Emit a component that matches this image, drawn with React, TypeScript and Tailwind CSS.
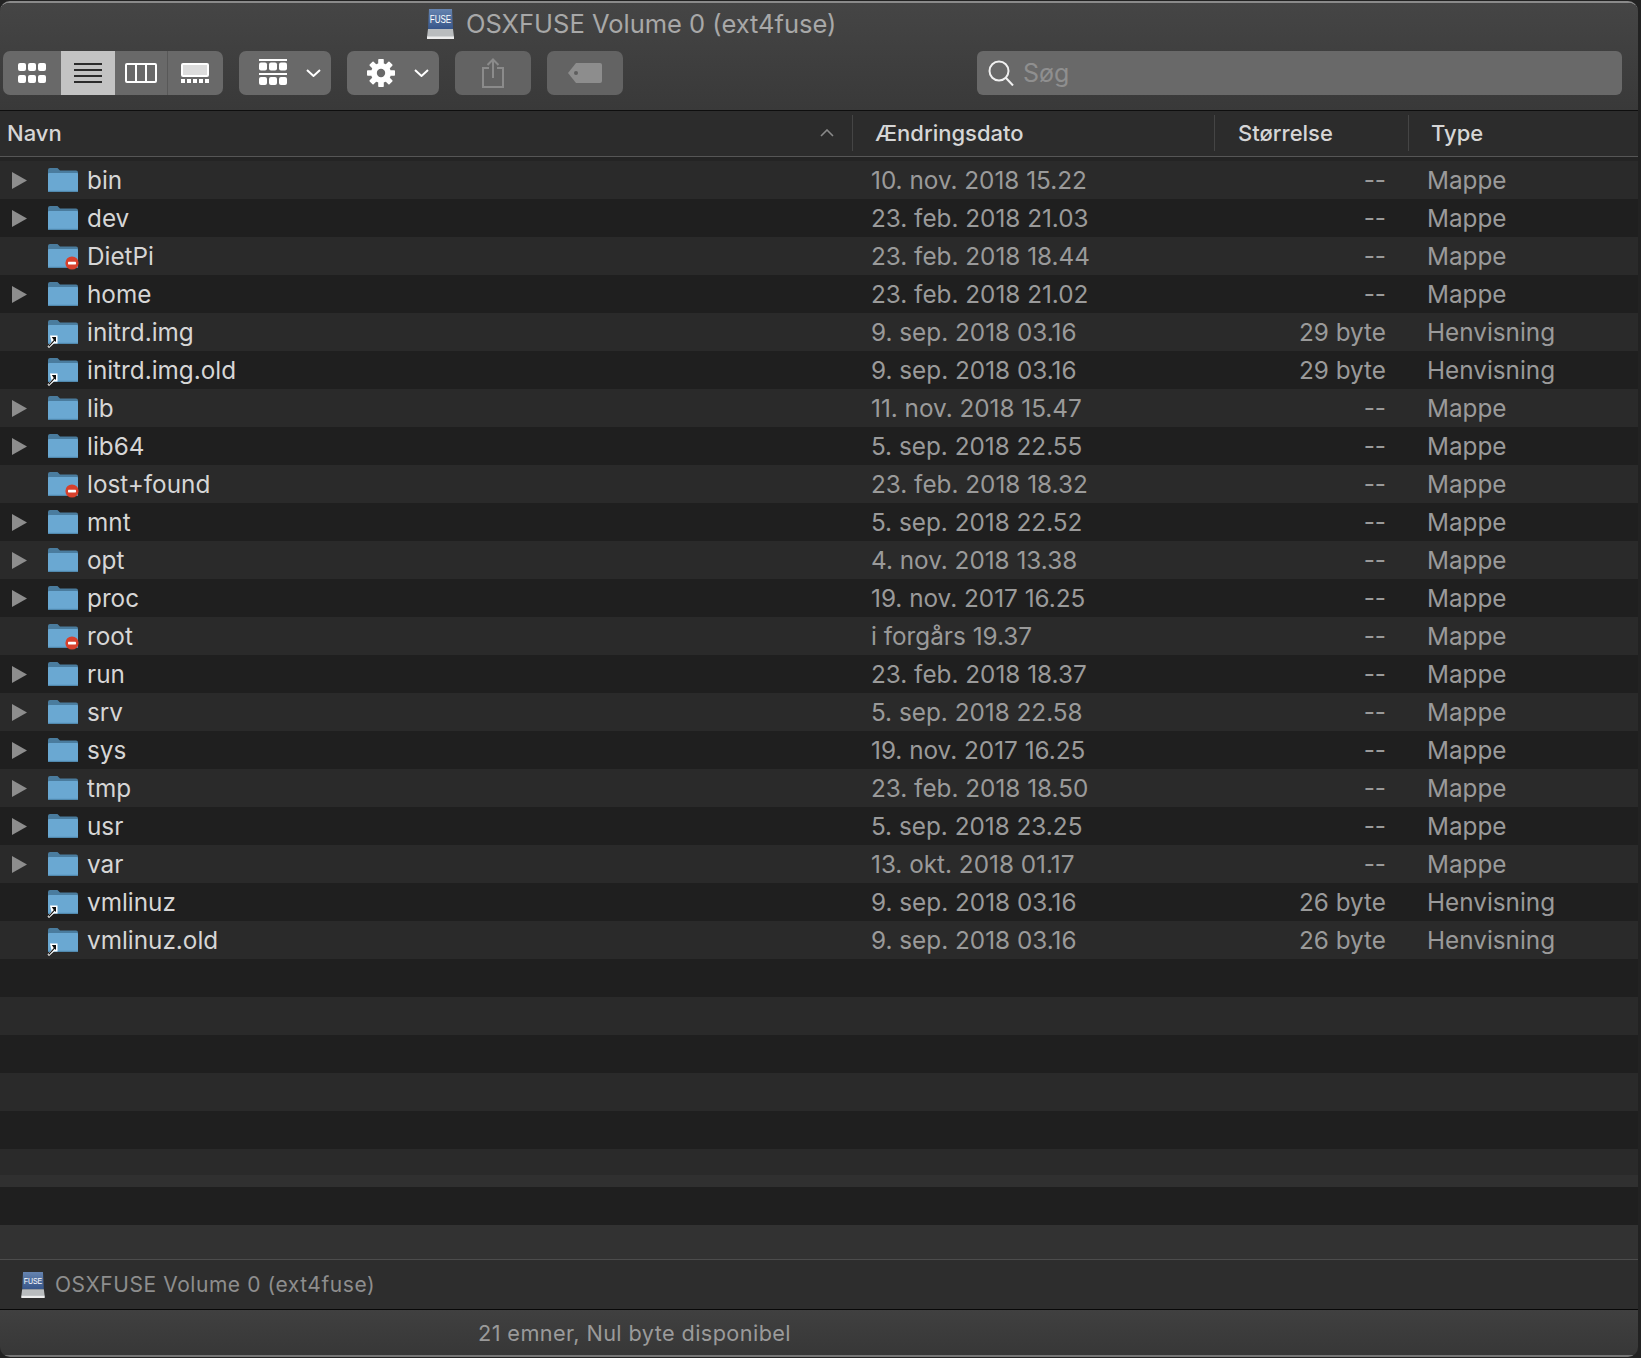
type Kind = 'folder' | 'locked' | 'alias'

const rows: { name: string; date: string; size: string; type: string; kind: Kind }[] = [
	{ name: 'bin', date: '10. nov. 2018 15.22', size: '--', type: 'Mappe', kind: 'folder' },
	{ name: 'dev', date: '23. feb. 2018 21.03', size: '--', type: 'Mappe', kind: 'folder' },
	{ name: 'DietPi', date: '23. feb. 2018 18.44', size: '--', type: 'Mappe', kind: 'locked' },
	{ name: 'home', date: '23. feb. 2018 21.02', size: '--', type: 'Mappe', kind: 'folder' },
	{ name: 'initrd.img', date: '9. sep. 2018 03.16', size: '29 byte', type: 'Henvisning', kind: 'alias' },
	{ name: 'initrd.img.old', date: '9. sep. 2018 03.16', size: '29 byte', type: 'Henvisning', kind: 'alias' },
	{ name: 'lib', date: '11. nov. 2018 15.47', size: '--', type: 'Mappe', kind: 'folder' },
	{ name: 'lib64', date: '5. sep. 2018 22.55', size: '--', type: 'Mappe', kind: 'folder' },
	{ name: 'lost+found', date: '23. feb. 2018 18.32', size: '--', type: 'Mappe', kind: 'locked' },
	{ name: 'mnt', date: '5. sep. 2018 22.52', size: '--', type: 'Mappe', kind: 'folder' },
	{ name: 'opt', date: '4. nov. 2018 13.38', size: '--', type: 'Mappe', kind: 'folder' },
	{ name: 'proc', date: '19. nov. 2017 16.25', size: '--', type: 'Mappe', kind: 'folder' },
	{ name: 'root', date: 'i forgårs 19.37', size: '--', type: 'Mappe', kind: 'locked' },
	{ name: 'run', date: '23. feb. 2018 18.37', size: '--', type: 'Mappe', kind: 'folder' },
	{ name: 'srv', date: '5. sep. 2018 22.58', size: '--', type: 'Mappe', kind: 'folder' },
	{ name: 'sys', date: '19. nov. 2017 16.25', size: '--', type: 'Mappe', kind: 'folder' },
	{ name: 'tmp', date: '23. feb. 2018 18.50', size: '--', type: 'Mappe', kind: 'folder' },
	{ name: 'usr', date: '5. sep. 2018 23.25', size: '--', type: 'Mappe', kind: 'folder' },
	{ name: 'var', date: '13. okt. 2018 01.17', size: '--', type: 'Mappe', kind: 'folder' },
	{ name: 'vmlinuz', date: '9. sep. 2018 03.16', size: '26 byte', type: 'Henvisning', kind: 'alias' },
	{ name: 'vmlinuz.old', date: '9. sep. 2018 03.16', size: '26 byte', type: 'Henvisning', kind: 'alias' },
]

function FuseIcon({ className }: { className: string }) {
	return (
		<svg viewBox="0 0 27 30" className={className}>
			<defs>
				<linearGradient id="fuseFace" x1="0" y1="0" x2="0" y2="1">
					<stop offset="0" stopColor="#6684b0" />
					<stop offset="1" stopColor="#37568a" />
				</linearGradient>
			</defs>
			<path d="M2 0h23l1 20H1z" fill="url(#fuseFace)" />
			<path d="M1 20h25l1 8H0z" fill="#b9bcbe" />
			<rect x="0" y="27.5" width="27" height="2.5" fill="#ececec" />
			<text
				transform="translate(13.5 14) scale(1 1.3)"
				textAnchor="middle"
				fontSize="8"
				fill="#ffffff"
				fontFamily="Liberation Sans, sans-serif"
			>
				FUSE
			</text>
		</svg>
	)
}

function FolderIcon({ kind }: { kind: Kind }) {
	return (
		<svg viewBox="0 0 30 24" className="h-[24px] w-[30px] overflow-visible">
			<path d="M0 2a2 2 0 0 1 2-2h7.5l2.5 2.5h16a2 2 0 0 1 2 2V10H0z" fill="#4a7c9e" />
			<path d="M0 6a1 1 0 0 1 1-1h28a1 1 0 0 1 1 1v16.5a1.5 1.5 0 0 1-1.5 1.5h-27A1.5 1.5 0 0 1 0 22.5z" fill="#6aa8d2" />
			<rect x="0" y="22.8" width="30" height="1.2" fill="#5189ae" />
			{kind === 'locked' && (
				<g>
					<circle cx="24" cy="19" r="6.6" fill="#d7402c" />
					<rect x="20" y="17.8" width="8" height="2.6" rx="0.6" fill="#ffffff" />
				</g>
			)}
			{kind === 'alias' && (
				<g>
					<path d="M2 15.5h7.5v8H6L1 28l-1.5-1.5L3.5 22z" fill="#ffffff" />
					<path d="M3.8 17h4.2v5l-1.3-1.3-5.6 6-.8-.8 5.5-6z" fill="#111111" />
				</g>
			)}
		</svg>
	)
}

function Triangle() {
	return (
		<svg viewBox="0 0 15 17" className="h-[17px] w-[15px]">
			<path d="M0 0l15 8.5L0 17z" fill="#8d8d8d" />
		</svg>
	)
}

function Chevron() {
	return (
		<svg viewBox="0 0 15 8" className="h-[8px] w-[15px]">
			<path d="M1 1l6.5 6L14 1" fill="none" stroke="#ffffff" strokeWidth="2" />
		</svg>
	)
}

function DotRow({ y }: { y: number }) {
	return (
		<g fill="#ffffff">
			<rect x="0" y={y} width="8" height="8" rx="2" />
			<rect x="10" y={y} width="8" height="8" rx="2" />
			<rect x="20" y={y} width="8" height="8" rx="2" />
		</g>
	)
}

function ViewSwitcher() {
	return (
		<div className="flex h-[44px] w-[220px] overflow-hidden rounded-[7px] bg-[#696969]">
			<div className="flex w-[58px] items-center justify-center">
				<svg viewBox="0 0 28 20" className="h-[20px] w-[28px]">
					<DotRow y={0} />
					<DotRow y={12} />
				</svg>
			</div>
			<div className="flex w-[54px] items-center justify-center bg-[#c3c3c3]">
				<svg viewBox="0 0 28 20" className="h-[20px] w-[28px]" fill="#2b2b2b">
					<rect y="0" width="28" height="2" />
					<rect y="6" width="28" height="2" />
					<rect y="12" width="28" height="2" />
					<rect y="18" width="28" height="2" />
				</svg>
			</div>
			<div className="flex w-[53px] items-center justify-center border-r border-[#585858]">
				<svg viewBox="0 0 32 20" className="h-[20px] w-[32px]" fill="none" stroke="#ffffff" strokeWidth="2">
					<rect x="1" y="1" width="30" height="18" rx="1" />
					<path d="M11 1v18M21 1v18" />
				</svg>
			</div>
			<div className="flex flex-1 items-center justify-center pr-[2px]">
				<svg viewBox="0 0 28 20" className="h-[20px] w-[28px]">
					<rect x="1" y="1" width="26" height="12" rx="1" fill="#dcdcdc" stroke="#ffffff" strokeWidth="2" />
					{[0, 6, 12, 18, 24].map(x => (
						<rect key={x} x={x} y="16" width="4" height="4" fill="#ffffff" />
					))}
				</svg>
			</div>
		</div>
	)
}

function ArrangeButton() {
	return (
		<div className="ml-[16px] flex h-[44px] w-[92px] items-center rounded-[7px] bg-[#696969] pl-[20px]">
			<svg viewBox="0 0 28 28" className="h-[28px] w-[28px]">
				<rect y="0" width="28" height="2" fill="#ffffff" />
				<DotRow y={3.5} />
				<rect y="14" width="28" height="2" fill="#ffffff" />
				<DotRow y={18} />
			</svg>
			<div className="ml-[19px] flex">
				<Chevron />
			</div>
		</div>
	)
}

function ActionButton() {
	return (
		<div className="ml-[16px] flex h-[44px] w-[92px] items-center rounded-[7px] bg-[#696969] pl-[20px]">
			<svg viewBox="-14 -14 28 28" className="h-[28px] w-[28px]">
				<g fill="#ffffff">
					<circle r="10" />
					{[0, 45, 90, 135].map(a => (
						<rect key={a} x="-2.8" y="-14" width="5.6" height="28" rx="0.8" transform={`rotate(${a})`} />
					))}
				</g>
				<circle r="4.2" fill="#696969" />
			</svg>
			<div className="ml-[19px] flex">
				<Chevron />
			</div>
		</div>
	)
}

function ShareButton() {
	return (
		<div className="ml-[16px] flex h-[44px] w-[76px] items-center justify-center rounded-[7px] bg-[#636363]">
			<svg viewBox="0 0 22 30" className="h-[30px] w-[22px]" fill="none" stroke="#8b8b8b" strokeWidth="2">
				<path d="M7 10H1v19h20V10h-6" />
				<path d="M11 20V1.5M5.5 7L11 1.5 16.5 7" />
			</svg>
		</div>
	)
}

function TagButton() {
	return (
		<div className="ml-[16px] flex h-[44px] w-[76px] items-center justify-center rounded-[7px] bg-[#636363]">
			<svg viewBox="0 0 34 20" className="h-[20px] w-[34px]">
				<path d="M8 0h24a2 2 0 0 1 2 2v16a2 2 0 0 1-2 2H8L0 10z" fill="#8d8d8d" />
				<circle cx="8" cy="10" r="2" fill="#5e5e5e" />
			</svg>
		</div>
	)
}

function SearchField() {
	return (
		<div className="ml-[354px] flex h-[44px] w-[645px] items-center rounded-[6px] bg-[#696969] pl-[11px]">
			<svg viewBox="0 0 26 26" className="h-[26px] w-[26px]" fill="none" stroke="#f0f0f0" strokeWidth="2">
				<circle cx="11" cy="11" r="9.5" />
				<path d="M18 18l7 7.5" />
			</svg>
			<span className="ml-[9px] pt-[2px] text-[25px] text-[#8f8f8f]">Søg</span>
		</div>
	)
}

function ColumnHeaders() {
	return (
		<div className="flex h-[45px] items-center bg-[#2c2c2c] pb-[1px] text-[22px] font-medium text-[#d6d6d6]">
			<div className="flex h-[36px] w-[853px] items-center justify-between border-r border-[#454545] pl-[7px] pr-[18px]">
				<span>Navn</span>
				<svg viewBox="0 0 14 8" className="h-[8px] w-[14px]">
					<path d="M1 7l6-6 6 6" fill="none" stroke="#8a8a8a" strokeWidth="1.6" />
				</svg>
			</div>
			<div className="flex h-[36px] w-[362px] items-center border-r border-[#454545] pl-[22px]">Ændringsdato</div>
			<div className="flex h-[36px] w-[194px] items-center border-r border-[#454545] pl-[23px]">Størrelse</div>
			<div className="flex h-[36px] items-center pl-[22px]">Type</div>
		</div>
	)
}

function FileRow({ row, index }: { row: (typeof rows)[number]; index: number }) {
	return (
		<div className={`flex h-[38px] items-center text-[24.3px] ${index % 2 === 0 ? 'bg-[#2a2a2a]' : 'bg-[#1f1f1f]'}`}>
			<div className="flex w-[48px] pl-[12px]">{row.kind === 'folder' && <Triangle />}</div>
			<div className="flex w-[823px] items-center">
				<FolderIcon kind={row.kind} />
				<span className="ml-[9px] pt-[1px] text-[#d6d6d6]">{row.name}</span>
			</div>
			<div className="w-[340px] pt-[1px] text-[#9a9a9a]">{row.date}</div>
			<div className="w-[175px] pt-[1px] text-right text-[#9a9a9a]">{row.size}</div>
			<div className="ml-[41px] pt-[1px] text-[#9a9a9a]">{row.type}</div>
		</div>
	)
}

const fillers = [
	'h-[38px] bg-[#1f1f1f]',
	'h-[38px] bg-[#2a2a2a]',
	'h-[38px] bg-[#1f1f1f]',
	'h-[38px] bg-[#2a2a2a]',
	'h-[38px] bg-[#1f1f1f]',
	'h-[26px] bg-[#2a2a2a]',
	'h-[12px] bg-[#303030]',
	'h-[38px] bg-[#1f1f1f]',
	'h-[34px] bg-[#323232]',
]

export default function App() {
	return (
		<div className="h-[1358px] w-[1641px] overflow-hidden bg-[#222222] pr-[3px] pt-[1px] [font-family:Inter,sans-serif]">
			<div className="flex h-[1356px] flex-col overflow-hidden rounded-[10px] border-t-2 border-[#8a8a8a]">
				<div className="h-[107px] bg-gradient-to-b from-[#454545] to-[#393939]">
					<div className="flex h-[46px] items-center pb-[4px] pl-[427px]">
						<FuseIcon className="h-[30px] w-[27px]" />
						<span className="ml-[12px] text-[25.5px] text-[#a8a8a8]">OSXFUSE Volume 0 (ext4fuse)</span>
					</div>
					<div className="flex pl-[3px] pt-[2px]">
						<ViewSwitcher />
						<ArrangeButton />
						<ActionButton />
						<ShareButton />
						<TagButton />
						<SearchField />
					</div>
				</div>
				<div className="h-[1px] bg-[#0e0e0e]" />
				<ColumnHeaders />
				<div className="h-[1px] bg-[#565656]" />
				<div className="h-[4px] bg-[#242424]" />
				{rows.map((row, i) => (
					<FileRow key={row.name} row={row} index={i} />
				))}
				{fillers.map((c, i) => (
					<div key={i} className={c} />
				))}
				<div className="h-[1px] bg-[#4c4c4c]" />
				<div className="flex h-[49px] items-center bg-[#2d2d2d] pl-[21px]">
					<FuseIcon className="h-[26px] w-[24px]" />
					<span className="ml-[10px] text-[21px] tracking-[0.56px] text-[#8e8e8e]">OSXFUSE Volume 0 (ext4fuse)</span>
				</div>
				<div className="h-[1px] bg-[#080808]" />
				<div className="flex flex-1 items-center bg-gradient-to-b from-[#404040] to-[#373737] pl-[478px] pt-[1px] text-[21.7px] tracking-[0.4px] text-[#9a9a9a]">
					21 emner, Nul byte disponibel
				</div>
				<div className="h-[2px] bg-[#777777]" />
			</div>
		</div>
	)
}
